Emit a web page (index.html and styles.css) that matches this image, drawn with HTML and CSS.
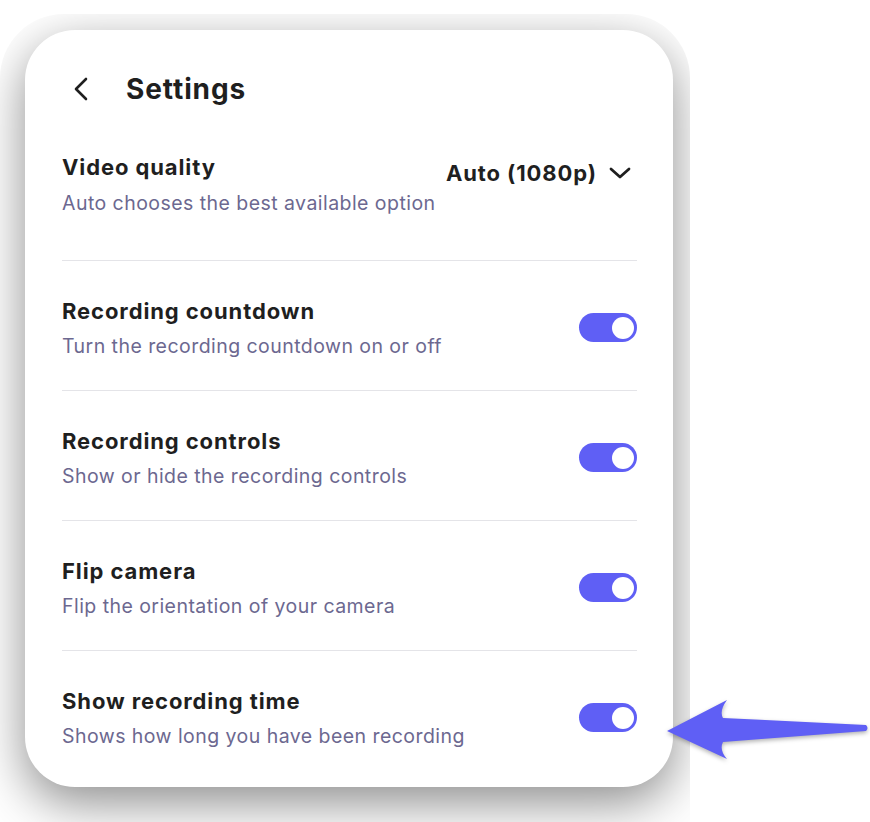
FILE: index.html
```html
<!DOCTYPE html>
<html lang="en">
<head>
  <meta charset="UTF-8">
  <title>Settings</title>
  <link rel="stylesheet" href="styles.css">
</head>
<body>
  <div class="frame">
    <div class="card">
      <div class="header">
        <svg class="back" width="16" height="24" viewBox="0 0 16 24">
          <path d="M13 2 L3 12 L13 22" fill="none" stroke="#1f1f1f" stroke-width="2.6" stroke-linecap="round" stroke-linejoin="round"/>
        </svg>
        <h1>Settings</h1>
      </div>

      <div class="row first">
        <div class="text">
          <div class="title">Video quality</div>
          <div class="desc">Auto chooses the best available option</div>
        </div>
        <div class="select">
          <span>Auto (1080p)</span>
          <svg width="24" height="14" viewBox="0 0 24 14">
            <path d="M3 3 L12 11 L21 3" fill="none" stroke="#1f1f1f" stroke-width="2.8" stroke-linecap="round" stroke-linejoin="round"/>
          </svg>
        </div>
      </div>

      <div class="row">
        <div class="text">
          <div class="title">Recording countdown</div>
          <div class="desc">Turn the recording countdown on or off</div>
        </div>
        <div class="toggle"><span class="knob"></span></div>
      </div>

      <div class="row">
        <div class="text">
          <div class="title">Recording controls</div>
          <div class="desc">Show or hide the recording controls</div>
        </div>
        <div class="toggle"><span class="knob"></span></div>
      </div>

      <div class="row">
        <div class="text">
          <div class="title">Flip camera</div>
          <div class="desc">Flip the orientation of your camera</div>
        </div>
        <div class="toggle"><span class="knob"></span></div>
      </div>

      <div class="row last">
        <div class="text">
          <div class="title">Show recording time</div>
          <div class="desc">Shows how long you have been recording</div>
        </div>
        <div class="toggle"><span class="knob"></span></div>
      </div>
    </div>
  </div>

  <svg class="arrow" width="210" height="70" viewBox="660 695 210 70">
    <path d="M667 731 L727 700 Q719 711 723 718 L866 725 Q869 728 866 731 L723 742 Q719 750 727 759 Z" fill="#5f5ff5"/>
  </svg>
</body>
</html>
```

FILE: styles.css
```css
html, body {
  margin: 0;
  padding: 0;
  background: #fff;
  overflow: hidden;
  height: 822px;
}
body {
  font-family: Inter, "Noto Sans", sans-serif;
  position: relative;
}
.frame {
  margin-top: 14px;
  width: 690px;
  height: 808px;
  border-radius: 64px 64px 0 0;
  overflow: hidden;
  padding: 16px 17px 0 25px;
  box-sizing: border-box;
}
.card {
  background: #fff;
  border-radius: 50px;
  box-shadow: 0 16px 50px rgba(0,0,0,0.45);
  padding: 39px 36px 7px 37px;
  width: 648px;
  box-sizing: border-box;
}
.header {
  display: flex;
  align-items: center;
  height: 40px;
}
.back {
  margin-left: 11px;
  margin-right: 37px;
}
h1 {
  margin: 0;
  font-size: 28px;
  font-weight: 700;
  color: #1f1f1f;
  letter-spacing: 0.9px;
}
.row {
  display: flex;
  align-items: center;
  justify-content: space-between;
  padding: 36px 0 30px;
  border-bottom: 1px solid #e4e4e8;
}
.row.first {
  padding: 44px 0 43px;
  align-items: flex-start;
}
.row.last {
  border-bottom: none;
}
.title {
  font-size: 22px;
  font-weight: 700;
  color: #1f1f1f;
  line-height: 28px;
  letter-spacing: 0.9px;
}
.desc {
  font-size: 19.5px;
  color: #6c6890;
  line-height: 28px;
  margin-top: 7px;
  letter-spacing: 0.45px;
}
.first .desc {
  margin-top: 8px;
}
.select {
  display: flex;
  align-items: center;
  gap: 11px;
  margin-top: 7px;
  margin-right: 5px;
  font-size: 22px;
  font-weight: 700;
  color: #1f1f1f;
  letter-spacing: 0.9px;
}
.toggle {
  width: 58px;
  height: 29px;
  border-radius: 15px;
  background: #5f5ff5;
  display: flex;
  align-items: center;
  justify-content: flex-end;
  padding: 0 3px;
  box-sizing: border-box;
  margin-top: -2px;
}
.knob {
  width: 22px;
  height: 22px;
  border-radius: 50%;
  background: #fff;
}
.arrow {
  position: absolute;
  left: 660px;
  top: 695px;
  filter: drop-shadow(0 2px 2px rgba(0,0,0,0.3));
}
```
